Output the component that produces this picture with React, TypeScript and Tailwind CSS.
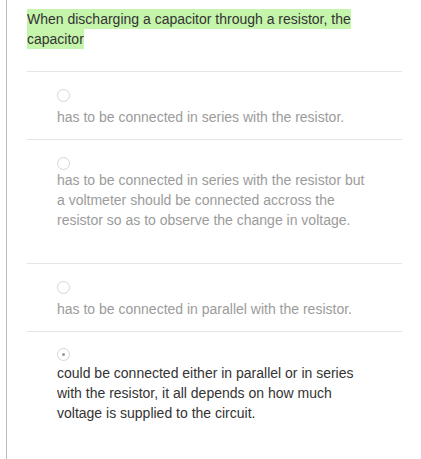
import React from "react";

function Radio({ checked }: { checked?: boolean }) {
  return (
    <div className="w-[13px] h-[13px] rounded-full border border-[#d6d6d6] bg-white flex items-center justify-center">
      {checked ? <div className="w-[3px] h-[3px] rounded-full bg-[#9a9a9a]" /> : null}
    </div>
  );
}

function Option({
  text,
  checked,
  gap,
  pb,
}: {
  text: string;
  checked?: boolean;
  gap: string;
  pb: string;
}) {
  return (
    <div className={`border-t border-[#e6e6e6] pt-[17px] pl-[30px] pr-[30px] ${pb}`}>
      <Radio checked={checked} />
      <div
        className={`${gap} text-[14px] leading-[20px] ${checked ? "text-[#333333]" : "text-[#9b9b9b]"}`}
      >
        {text}
      </div>
    </div>
  );
}

export default function App() {
  return (
    <div
      className="min-h-[459px] bg-white"
      style={{ fontFamily: '"Liberation Sans", Arial, Helvetica, sans-serif' }}
    >
      <div className="ml-[6px] min-h-[459px] border-l border-[#bdbdbd] pl-[20px] pr-[19px]">
        <div className="pt-[10px] pb-[22px] text-[14px] leading-[19.5px] text-[#333333]">
          <span className="bg-[#c5f4ab] py-[2px] box-decoration-clone">
            When discharging a capacitor through a resistor, the capacitor
          </span>
        </div>
        <Option
          text="has to be connected in series with the resistor."
          gap="mt-[5px]"
          pb="pb-[12px]"
        />
        <Option
          text="has to be connected in series with the resistor but a voltmeter should be connected accross the resistor so as to observe the change in voltage."
          gap="mt-[0px]"
          pb="pb-[33px]"
        />
        <Option
          text="has to be connected in parallel with the resistor."
          gap="mt-[5px]"
          pb="pb-[12px]"
        />
        <div className="border-t border-[#e6e6e6]">
          <div className="pt-[16px] pl-[30px] pr-[30px]">
            <Radio checked />
            <div className="mt-[2px] text-[14px] leading-[20px] text-[#333333]">
              could be connected either in parallel or in series with the resistor, it all depends on how much voltage is supplied to the circuit.
            </div>
          </div>
        </div>
      </div>
    </div>
  );
}
